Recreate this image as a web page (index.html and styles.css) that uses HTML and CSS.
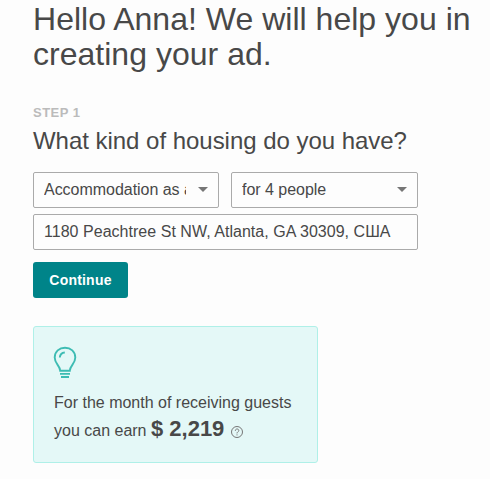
FILE: index.html
```html
<!DOCTYPE html>
<html lang="en">
<head>
    <title>Create your ad</title>
    <meta charset="UTF-8">
    <meta name="viewport" content="width=device-width, initial-scale=1.0">
    <link rel="stylesheet" href="styles.css">
</head>
<body>
    <div class="container">
        <h1 class="title">Hello Anna! We will help you in creating your ad.</h1>
        <div class="step">STEP 1</div>
        <h2 class="question">What kind of housing do you have?</h2>

        <form class="form">
            <div class="row">
                <div class="select-box">
                    <select class="field">
                        <option>Accommodation as a whole</option>
                    </select>
                    <svg class="caret" viewBox="0 0 10 5"><path d="M0 0h10L5 5z"/></svg>
                </div>
                <div class="select-box">
                    <select class="field">
                        <option>for 4 people</option>
                    </select>
                    <svg class="caret" viewBox="0 0 10 5"><path d="M0 0h10L5 5z"/></svg>
                </div>
            </div>
            <input class="field address" type="text" value="1180 Peachtree St NW, Atlanta, GA 30309, США">
            <button class="continue" type="button">Continue</button>
        </form>

        <div class="card">
            <svg class="bulb" viewBox="0 0 24 32">
                <path d="M7.200 24.700C7 19.500 1.700 17.800 1.700 11.500C1.700 5.500 6.300 1.700 12 1.700s10.300 3.800 10.300 9.800c0 6.300-5.300 8-5.500 13.200z"/>
                <path d="M6.800 11.500c.2-2.800 2-4.800 5-5M7 27.900h10M8 31h8"/>
            </svg>
            <p class="earn">For the month of receiving guests</p>
            <p class="earn">
                you can earn <span class="amount">$ 2,219</span>
                <svg class="help" viewBox="0 0 12 12">
                    <circle cx="6" cy="6" r="5.500"/>
                    <path d="M4.300 4.800c0-2.400 3.500-2.400 3.500-.2C7.800 5.800 6 5.800 6 7.400M6 8.400v1"/>
                </svg>
            </p>
        </div>
    </div>
</body>
</html>
```
FILE: styles.css
```css
* {
    box-sizing: border-box;
}

body {
    margin: 0;
    background-color: #fdfdfd;
    color: #484848;
    font-family: "Liberation Sans", Arial, sans-serif;
    overflow: hidden;
}

.container {
    width: 480px;
    padding: 2px 0 0 33px;
}

.title {
    margin: 0;
    font-size: 32px;
    font-weight: normal;
    letter-spacing: 0.02px;
    line-height: 35px;
}

.step {
    margin-top: 33px;
    color: #bbbbbb;
    font-size: 13px;
    font-weight: bold;
    letter-spacing: 0.5px;
    line-height: 16px;
}

.question {
    margin: 5px 0 0;
    font-size: 24px;
    font-weight: normal;
    letter-spacing: -0.03px;
    line-height: 30px;
}

.form {
    display: flex;
    flex-direction: column;
    align-items: flex-start;
    width: 385px;
    margin-top: 16px;
}

.row {
    display: grid;
    grid-template-columns: 186px 187px;
    gap: 12px;
}

.select-box {
    position: relative;
}

.field {
    display: block;
    width: 100%;
    height: 36px;
    margin: 0;
    padding: 0 32px 2px 10px;
    border: 1px solid #aaaaaa;
    border-radius: 2px;
    background-color: #fdfdfd;
    color: #484848;
    font-family: inherit;
    font-size: 16px;
    letter-spacing: -0.03px;
    appearance: none;
}

/* arrow on top of the select */
.caret {
    position: absolute;
    top: 15px;
    right: 11px;
    width: 10px;
    height: 5px;
    fill: #767676;
    pointer-events: none;
}

.address {
    margin-top: 6px;
    padding: 0 10px;
    letter-spacing: 0.03px;
}

.continue {
    width: 95px;
    height: 36px;
    margin-top: 12px;
    padding: 0;
    border: none;
    border-radius: 3px;
    background-color: #008489;
    color: #ffffff;
    font-family: inherit;
    font-size: 14px;
    font-weight: bold;
    letter-spacing: 0.2px;
}

.card {
    width: 285px;
    height: 137px;
    margin-top: 28px;
    padding: 19px 20px;
    border: 1px solid #aff0e8;
    border-radius: 3px;
    background-color: #e4f8f7;
}

.bulb {
    display: block;
    width: 24px;
    height: 32px;
    margin-left: -1px;
    fill: none;
    stroke: #3dbcb3;
    stroke-width: 1.9;
}

.earn {
    height: 28px;
    margin: 0;
    font-size: 16px;
    line-height: 28px;
}

.bulb + .earn {
    height: 26px;
    margin-top: 11px;
}

.amount {
    font-size: 22px;
    font-weight: bold;
}

.help {
    width: 12px;
    height: 12px;
    margin-left: 2px;
    vertical-align: -2px;
    fill: none;
    stroke: #767676;
}
```
